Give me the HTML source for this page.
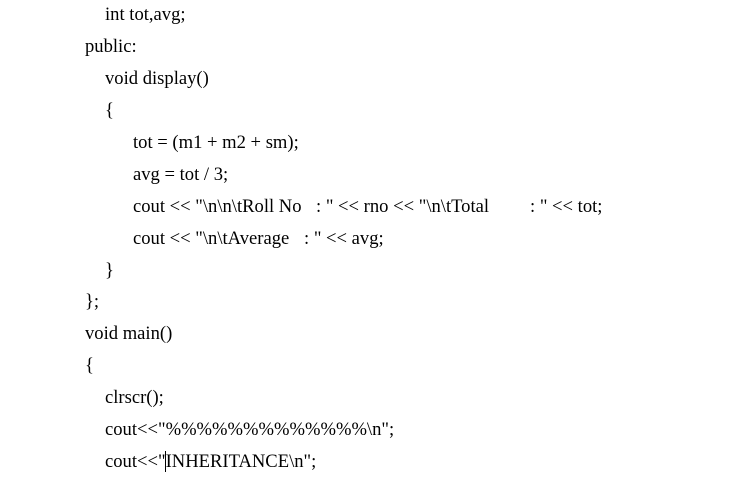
<!DOCTYPE html>
<html><head><style>
body{margin:0;width:737px;height:478px;background:#fff;overflow:hidden;position:relative;font-family:"Liberation Serif",serif;font-size:18.6px;color:#000}
.l{position:absolute;height:32px;line-height:32px;white-space:pre}
.a{position:absolute;top:0}
</style></head><body>
<div class="l" style="top:-1px;left:105px">int tot,avg;</div>
<div class="l" style="top:31px;left:85px">public:</div>
<div class="l" style="top:63px;left:105px">void display()</div>
<div class="l" style="top:95px;left:105px">{</div>
<div class="l" style="top:127px;left:133px">tot = (m1 + m2 + sm);</div>
<div class="l" style="top:159px;left:133px">avg = tot / 3;</div>
<div class="l" style="top:191px;left:133px;width:520px">cout &lt;&lt; "\n\n\tRoll No<span class="a" style="left:183px">: " &lt;&lt; rno &lt;&lt; "\n\tTotal</span><span class="a" style="left:397px">: " &lt;&lt; tot;</span></div>
<div class="l" style="top:223px;left:133px;width:400px">cout &lt;&lt; "\n\tAverage<span class="a" style="left:171px">: " &lt;&lt; avg;</span></div>
<div class="l" style="top:255px;left:105px">}</div>
<div class="l" style="top:286px;left:85px">};</div>
<div class="l" style="top:318px;left:85px">void main()</div>
<div class="l" style="top:350px;left:85px">{</div>
<div class="l" style="top:382px;left:105px">clrscr();</div>
<div class="l" style="top:414px;left:105px">cout&lt;&lt;"%%%%%%%%%%%%%\n";</div>
<div class="l" style="top:446px;left:105px">cout&lt;&lt;"<span style="border-left:1px solid #000;margin-left:-1px">I</span>NHERITANCE\n";</div>
</body></html>
